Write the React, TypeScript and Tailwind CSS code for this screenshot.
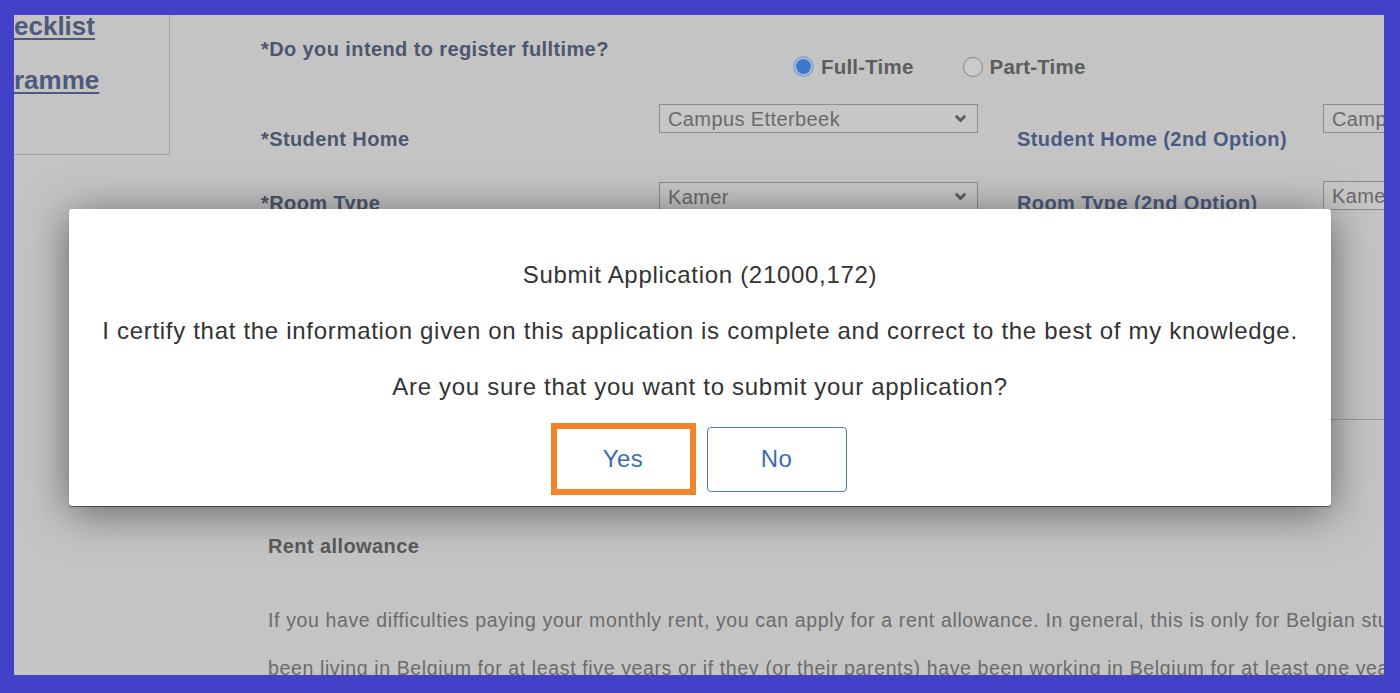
import type { ReactNode } from "react";

const font = "font-['Liberation_Sans',Arial,sans-serif]";

const Chevron = () => (
  <svg width="13" height="9" viewBox="0 0 13 9" className="shrink-0">
    <polyline
      points="1.8,1.8 6.5,6.5 11.2,1.8"
      fill="none"
      stroke="#5c5c5c"
      strokeWidth="2.8"
    />
  </svg>
);

const Select = ({ value, width }: { value: string; width: string }) => (
  <div
    className={`${width} h-[29px] shrink-0 flex items-center justify-between border border-[#8c8c8c] bg-[#c7c7c7] pl-[8px] pr-[10px]`}
  >
    <span className="text-[20px] leading-none tracking-[0.4px] text-[#6a6a6a] whitespace-nowrap">
      {value}
    </span>
    <Chevron />
  </div>
);

const Label = ({ children, className }: { children: ReactNode; className?: string }) => (
  <div
    className={`text-[20px] leading-[20px] tracking-[0.4px] font-bold whitespace-nowrap ${className ?? ""}`}
  >
    {children}
  </div>
);

const Radio = ({ checked, label }: { checked?: boolean; label: string }) => (
  <div className="flex items-center gap-[7px]">
    {checked ? (
      <span className="w-[21px] h-[21px] rounded-full border-[2px] border-[#86a9d8] flex items-center justify-center">
        <span className="w-[15px] h-[15px] rounded-full bg-[#3b77cc]" />
      </span>
    ) : (
      <span className="w-[20px] h-[20px] rounded-full border border-[#858585] bg-[#cbcbcb]" />
    )}
    <span className="text-[20.5px] leading-[20px] tracking-[0.2px] font-bold text-[#5d5d5d]">
      {label}
    </span>
  </div>
);

export default function App() {
  return (
    <div className={`w-[1400px] h-[693px] bg-[#4242c9] pt-[15px] pl-[14px] pr-[16px] pb-[18px] ${font}`}>
      <div className="relative h-full overflow-hidden bg-[#c4c4c4]">
        <div className="flex">
          {/* sidebar */}
          <div className="w-[156px] h-[140px] shrink-0 border-r border-b border-[#a6a6a6] overflow-hidden">
            <div className="-mt-[16px] text-[26px] leading-[54px] font-bold text-[#4d5a7c] underline underline-offset-[3px]">
              <div>ecklist</div>
              <div>ramme</div>
            </div>
          </div>

          {/* form */}
          <div className="pl-[91px] w-[1214px] shrink-0 text-[#4c5670]">
            <div className="flex items-start h-[89px]">
              <Label className="w-[398px] shrink-0 mt-[24px]">
                *Do you intend to register fulltime?
              </Label>
              <div className="flex items-center gap-[49px] mt-[41px] ml-[134px]">
                <Radio checked label="Full-Time" />
                <Radio label="Part-Time" />
              </div>
            </div>

            <div className="flex items-start h-[78px]">
              <Label className="w-[398px] shrink-0 mt-[25px]">*Student Home</Label>
              <Select value="Campus Etterbeek" width="w-[319px]" />
              <Label className="w-[306px] shrink-0 ml-[39px] mt-[25px] text-[#4b5a82]">
                Student Home (2nd Option)
              </Label>
              <Select value="Campus Etterbeek" width="w-[319px]" />
            </div>

            <div className="flex items-start h-[110px]">
              <Label className="w-[398px] shrink-0 mt-[11px]">*Room Type</Label>
              <Select value="Kamer" width="w-[319px]" />
              <Label className="w-[306px] shrink-0 ml-[39px] mt-[11px] text-[#4b5a82]">
                Room Type (2nd Option)
              </Label>
              <div className="-mt-[1px]">
                <Select value="Kamer" width="w-[319px]" />
              </div>
            </div>

            <div className="h-[128px] border-b border-[#9c9c9c]" />

            <div className="pl-[7px] text-[#5a5a5a]">
              <div className="mt-[114px] text-[20px] leading-[24px] tracking-[0.4px] font-bold">
                Rent allowance
              </div>
              <div className="mt-[38px] text-[19.5px] leading-[48px] tracking-[0.63px] text-[#6b6b6b] whitespace-nowrap">
                <div>
                  If you have difficulties paying your monthly rent, you can apply for a rent
                  allowance. In general, this is only for Belgian students.
                </div>
                <div>
                  been living in Belgium for at least five years or if they (or their parents)
                  have been working in Belgium for at least one year.
                </div>
              </div>
            </div>
          </div>
        </div>

        {/* dialog */}
        <div className="absolute left-[55px] top-[194px] w-[1262px] h-[297px] rounded-[3px] bg-white shadow-[0_1px_1px_rgba(0,0,0,0.5),0_6px_44px_rgba(0,0,0,0.5)] flex flex-col items-center text-[#333] text-[24px] leading-[28px] tracking-[0.7px]">
          <div className="mt-[52px]">Submit Application (21000,172)</div>
          <div className="mt-[28px]">
            I certify that the information given on this application is complete and correct to
            the best of my knowledge.
          </div>
          <div className="mt-[28px]">Are you sure that you want to submit your application?</div>
          <div className="mt-[22px] flex items-center gap-[11px] ml-[-3px]">
            <button className="w-[145px] h-[72px] border-[6px] border-[#f5822b] bg-white text-[#3d6db0] text-[24px] tracking-[0.5px]">
              Yes
            </button>
            <button className="w-[140px] h-[65px] border border-[#4f7db3] rounded-[4px] bg-white text-[#3d6db0] text-[24px] tracking-[0.5px]">
              No
            </button>
          </div>
        </div>
      </div>
    </div>
  );
}
